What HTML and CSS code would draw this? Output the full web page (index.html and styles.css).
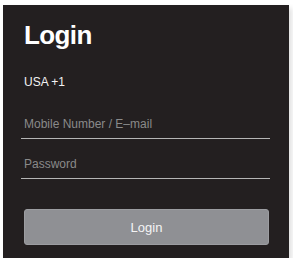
FILE: index.html
```html
<!DOCTYPE html>
<html lang="en">
<head>
    <meta charset="UTF-8">
    <meta name="viewport" content="width=device-width, initial-scale=1.0">
    <title>Login</title>
    <link rel="stylesheet" href="styles.css">
</head>
<body>
    <div class="login-panel">
        <h1>Login</h1>
        <div class="country">USA +1</div>
        <input type="text" class="field field-first" placeholder="Mobile Number / E–mail">
        <input type="password" class="field" placeholder="Password">
        <button class="login-button">Login</button>
    </div>
</body>
</html>
```

FILE: styles.css
```css
body {
    font-family: "Liberation Sans", Arial, sans-serif;
    margin: 0;
    padding: 0;
    background: #fff;
}
.login-panel {
    box-sizing: border-box;
    margin: 5px 0 0 3px;
    width: 286px;
    height: 253px;
    padding: 15px 19px 0 18px;
    background: #231f20;
    box-shadow: 3px 3px 5px rgba(0,0,0,0.12);
    display: flex;
    flex-direction: column;
}
.login-panel h1 {
    margin: 0 0 0 3px;
    font-size: 26px;
    line-height: 30px;
    font-weight: bold;
    letter-spacing: -0.6px;
    color: #fff;
}
.country {
    margin: 25px 0 0 3px;
    font-size: 12px;
    line-height: 14px;
    color: #f2f2f2;
}
.field {
    display: block;
    margin: 18px 0 0 0;
    padding: 0 3px 7px;
    height: 14px;
    font-family: inherit;
    font-size: 12px;
    line-height: 14px;
    color: #ddd;
    background: transparent;
    border: none;
    border-bottom: 1px solid #b5b5b5;
    outline: none;
}
.field::placeholder {
    color: #8a8a8a;
}
.field-first {
    margin-top: 28px;
}
.login-button {
    margin: 30px 1px 0 3px;
    height: 36px;
    font-family: inherit;
    font-size: 13px;
    color: #f4f4f4;
    background: #8f9094;
    border: 1px solid #9c9da1;
    border-radius: 3px;
    cursor: pointer;
}
```
